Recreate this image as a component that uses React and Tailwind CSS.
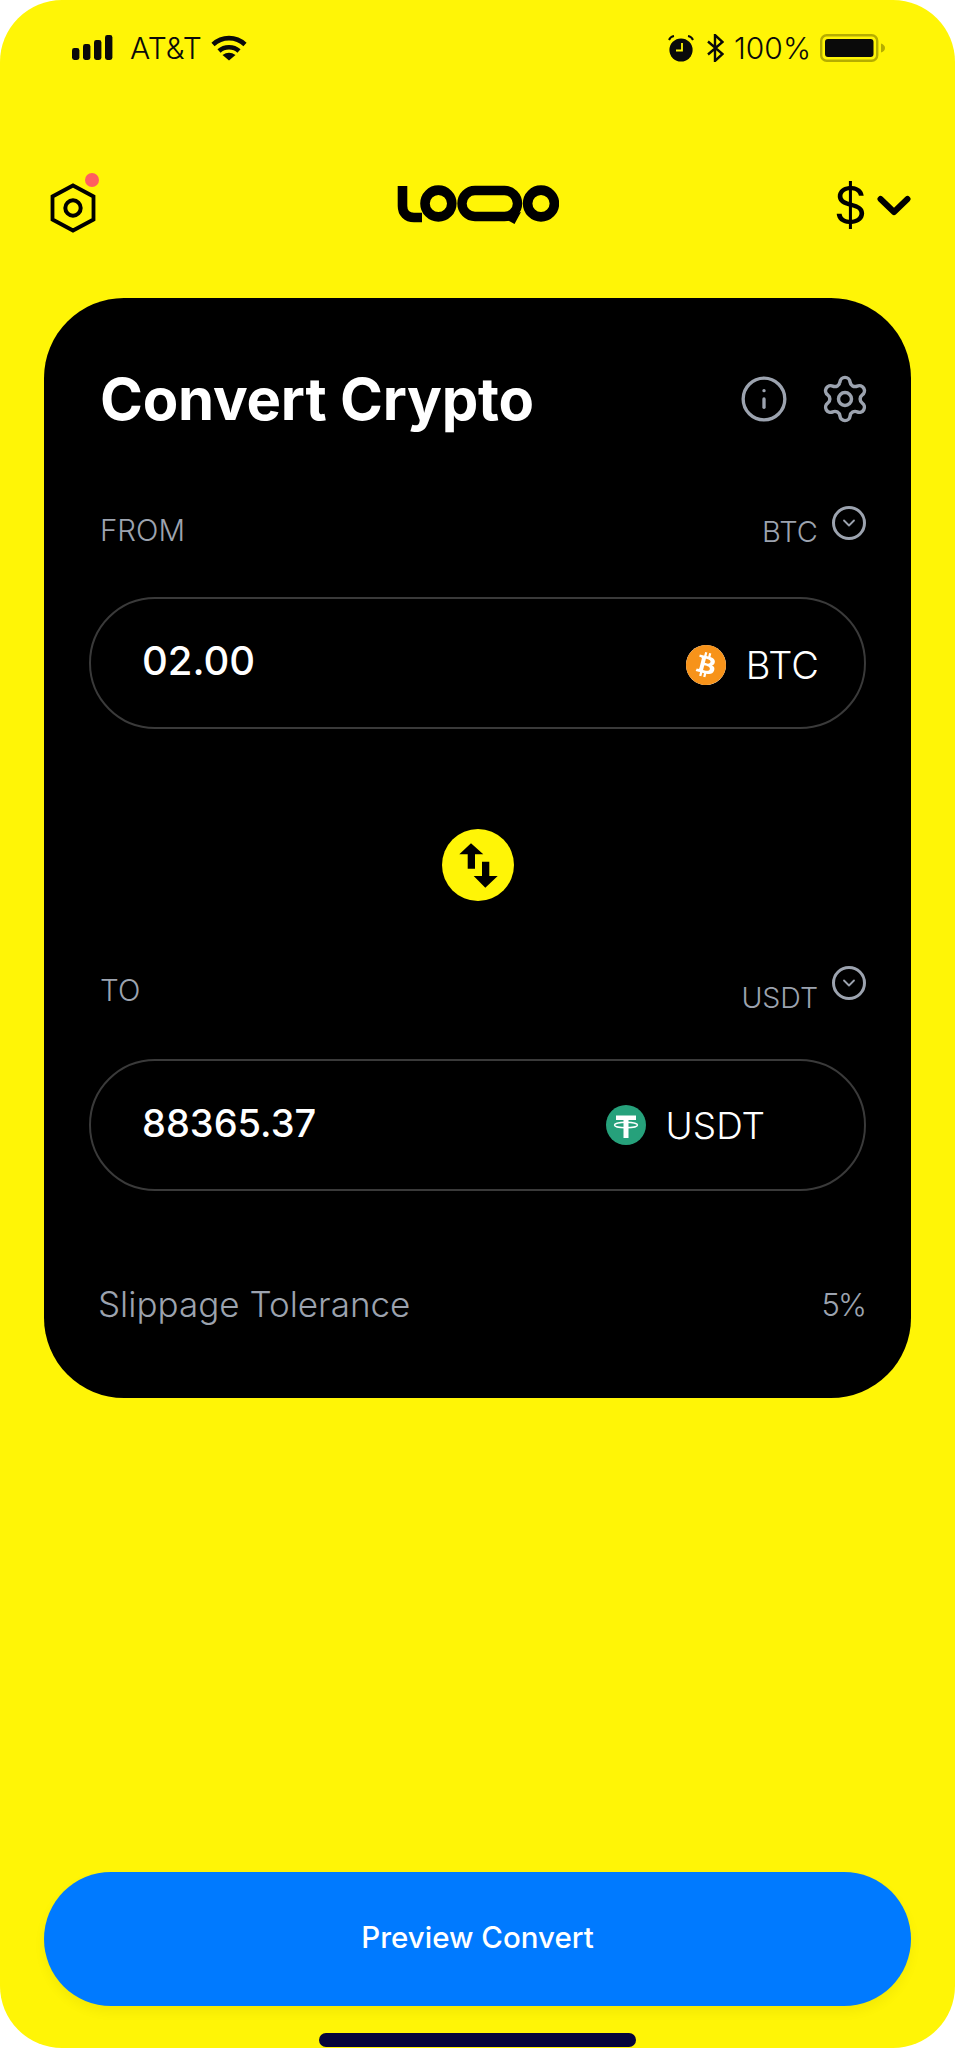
import React from "react";
import { Info, Settings, ChevronDown } from "lucide-react";
import { SiBitcoin } from "react-icons/si";

function Signal() {
  return (
    <svg width="42" height="26" viewBox="0 0 42 26" className="shrink-0">
      <rect x="0" y="13" width="7.4" height="12" rx="2.4" fill="#0a0a0a" />
      <rect x="11" y="9" width="7.4" height="16" rx="2.4" fill="#0a0a0a" />
      <rect x="22" y="5" width="7.4" height="20" rx="2.4" fill="#0a0a0a" />
      <rect x="33" y="0" width="7.4" height="25" rx="2.4" fill="#0a0a0a" />
    </svg>
  );
}

function Wifi() {
  return (
    <svg width="36" height="26" viewBox="0 0 36 26" className="shrink-0">
      <path d="M2 9.5C11 1 25 1 34 9.5" fill="none" stroke="#0a0a0a" strokeWidth="4.6" strokeLinecap="butt" />
      <path d="M8 16C13.5 11 22.5 11 28 16" fill="none" stroke="#0a0a0a" strokeWidth="4.6" strokeLinecap="butt" />
      <path d="M11.5 20Q18 15.5 24.5 20L18 25.5Z" fill="#0a0a0a" />
    </svg>
  );
}

function Alarm() {
  return (
    <svg width="26" height="28" viewBox="0 0 26 28" className="shrink-0">
      <circle cx="13" cy="16" r="11.6" fill="#0a0a0a" />
      <path d="M14 9V16.5H8" fill="none" stroke="#fff506" strokeWidth="1.8" />
      <path d="M1 6Q2.5 2.5 6 2M25 6Q23.5 2.5 20 2" fill="none" stroke="#0a0a0a" strokeWidth="2" />
    </svg>
  );
}

function Bluetooth() {
  return (
    <svg width="17" height="28" viewBox="0 0 17 28" className="shrink-0">
      <path d="M1 7.5L15.5 20L8 27V1L15.5 8L1 20.5" fill="none" stroke="#0a0a0a" strokeWidth="2.4" />
    </svg>
  );
}

function Battery() {
  return (
    <svg width="66" height="28" viewBox="0 0 66 28" className="shrink-0">
      <rect x="1.2" y="1.2" width="56" height="25.6" rx="5.5" fill="none" stroke="#b5ad00" strokeWidth="2.4" />
      <rect x="5" y="5" width="48.5" height="18" rx="3" fill="#0a0a0a" />
      <path d="M61 9.5Q65 11 65 14Q65 17 61 18.5Z" fill="#b5ad00" />
    </svg>
  );
}

function Hex() {
  return (
    <svg width="46" height="50" viewBox="0 0 46 50" className="shrink-0">
      <path d="M23 2.5L43.5 13.5V36.5L23 47.5L2.5 36.5V13.5Z" fill="none" stroke="#000" strokeWidth="3.8" />
      <circle cx="23" cy="25" r="7.7" fill="none" stroke="#000" strokeWidth="4" />
    </svg>
  );
}

function Logo() {
  return (
    <svg width="162" height="40" viewBox="12 15 162 40" className="shrink-0 mb-[2px]">
      <path d="M17.5 16V36C17.5 43 22 47.5 29 47.5H37" fill="none" stroke="#000" strokeWidth="9.6" />
      <circle cx="53.4" cy="33.5" r="13.4" fill="none" stroke="#000" strokeWidth="9.6" />
      <rect x="77" y="20.5" width="55.5" height="26" rx="13" fill="none" stroke="#000" strokeWidth="9.4" />
      <path d="M118 48L136 42L129.5 54L125 51.5Z" fill="#000" />
      <circle cx="156" cy="33.5" r="13.4" fill="none" stroke="#000" strokeWidth="9.6" />
    </svg>
  );
}

function Swap() {
  return (
    <svg width="72" height="72" viewBox="0 0 72 72" className="shrink-0">
      <circle cx="36" cy="36" r="36" fill="#fff506" />
      <path d="M29 14.3L17.3 25.3H25.7V39.7H33V25.3H41.3Z" fill="#000" />
      <path d="M40 32.7H47.3V47H55.7L43.3 58.7L31.7 47H40Z" fill="#000" />
    </svg>
  );
}

function Tether() {
  return (
    <svg width="40" height="40" viewBox="0 0 40 40" className="shrink-0">
      <circle cx="20" cy="20" r="20" fill="#26a17b" />
      <path d="M10 10.5H30V15H22.5V33H17.5V15H10Z" fill="#fff" />
      <ellipse cx="20" cy="20" rx="11.5" ry="2.8" fill="none" stroke="#fff" strokeWidth="1.4" />
    </svg>
  );
}

function BitcoinIcon() {
  return (
    <div className="relative w-[40px] h-[40px] shrink-0 rounded-full bg-white">
      <SiBitcoin size={40} color="#f7931a" className="block" />
    </div>
  );
}

function CircleChevron({ className }) {
  return (
    <div className={`flex items-center justify-center w-[34px] h-[34px] rounded-full border-[3px] border-[#9ca3af] shrink-0 ${className}`}>
      <ChevronDown size={20} color="#9ca3af" strokeWidth={2.2} />
    </div>
  );
}

export default function App() {
  return (
    <div className="w-[955px] h-[2048px] bg-white font-[family-name:Inter,sans-serif] overflow-hidden">
      <div className="h-[2048px] bg-[#fff506] rounded-[62px] flex flex-col">
        <div className="h-[96px] pl-[72px] pr-[69px] flex items-center justify-between text-[#0a0a0a]">
          <div className="flex items-center">
            <Signal />
            <span className="ml-[16px] mr-[9px] text-[30px] leading-none font-light">AT&amp;T</span>
            <Wifi />
          </div>
          <div className="flex items-center">
            <Alarm />
            <div className="w-[13px]" />
            <Bluetooth />
            <span className="ml-[10px] mr-[9px] text-[30px] leading-none font-light">100%</span>
            <Battery />
          </div>
        </div>

        <div className="mt-[80px] mx-[44px] h-[60px] grid grid-cols-[1fr_auto_1fr] items-center">
          <div className="relative pl-[6px] pt-[4px] w-[60px]">
            <Hex />
            <div className="absolute left-[41px] top-[-6px] w-[14px] h-[14px] rounded-full bg-[#ff5f5f]" />
          </div>
          <Logo />
          <div className="flex items-center justify-end gap-[10px] text-black">
            <span className="text-[52px] leading-none font-normal">$</span>
            <svg width="34" height="22" viewBox="0 0 34 22">
              <path d="M3.5 4L17 17L30.5 4" fill="none" stroke="#000" strokeWidth="6" strokeLinecap="round" strokeLinejoin="round" />
            </svg>
          </div>
        </div>

        <div className="mt-[62px] mx-[44px] h-[1100px] bg-black rounded-[80px] flex flex-col">
          <div className="mt-[70px] h-[62px] pl-[56px] pr-[40px] flex items-center justify-between">
            <h1 className="text-[58px] leading-none font-bold text-white tracking-[-0.2px]">Convert Crypto</h1>
            <div className="flex items-center gap-[30px]">
              <Info size={50} color="#9ca3af" strokeWidth={1.6} />
              <Settings size={52} color="#9ca3af" strokeWidth={1.6} />
            </div>
          </div>

          <div className="mt-[79px] h-[44px] pl-[56px] pr-[45px] flex items-center justify-between text-[#9ca3af] text-[29.5px] font-light">
            <span className="leading-none">FROM</span>
            <div className="flex items-center gap-[14px]">
              <span className="leading-none text-[29px]">BTC</span>
              <CircleChevron className="mb-[16px]" />
            </div>
          </div>

          <div className="mt-[44px] ml-[45px] mr-[45px] h-[132px] rounded-full border-2 border-[#3a3a3a] pl-[51px] pr-[45px] flex items-center justify-between text-white">
            <span className="text-[40px] leading-none font-medium mb-[4px]">02.00</span>
            <div className="flex items-center gap-[20px] mt-[4px]">
              <BitcoinIcon />
              <span className="text-[38px] leading-none font-light">BTC</span>
            </div>
          </div>

          <div className="mt-[100px] flex justify-center">
            <Swap />
          </div>

          <div className="mt-[68px] h-[44px] pl-[56px] pr-[45px] flex items-center justify-between text-[#9ca3af] text-[29.5px] font-light">
            <span className="leading-none">TO</span>
            <div className="flex items-center gap-[14px]">
              <span className="leading-none mt-[14px] text-[28.5px]">USDT</span>
              <CircleChevron className="mb-[16px]" />
            </div>
          </div>

          <div className="mt-[46px] ml-[45px] mr-[45px] h-[132px] rounded-full border-2 border-[#3a3a3a] pl-[51px] pr-[99px] flex items-center justify-between text-white">
            <span className="text-[38px] leading-none font-medium mb-[4px]">88365.37</span>
            <div className="flex items-center gap-[20px]">
              <Tether />
              <span className="text-[37px] leading-none font-light">USDT</span>
            </div>
          </div>

          <div className="mt-[91px] h-[44px] pl-[54px] pr-[46px] flex items-center justify-between text-[#9ca3af] font-light">
            <span className="text-[35px] leading-none">Slippage Tolerance</span>
            <span className="text-[31px] leading-none tracking-[-2px]">5%</span>
          </div>
        </div>

        <button className="mt-auto mx-[44px] h-[134px] rounded-[67px] bg-[#007aff] shadow-[0_6px_12px_rgba(0,0,0,0.05)] text-white text-[29.5px] leading-none pb-[2px] font-medium flex items-center justify-center">
          Preview Convert
        </button>
        <div className="mt-[27px] mb-px h-[14px] w-[317px] mx-auto rounded-full bg-[#05053a]" />
      </div>
    </div>
  );
}
